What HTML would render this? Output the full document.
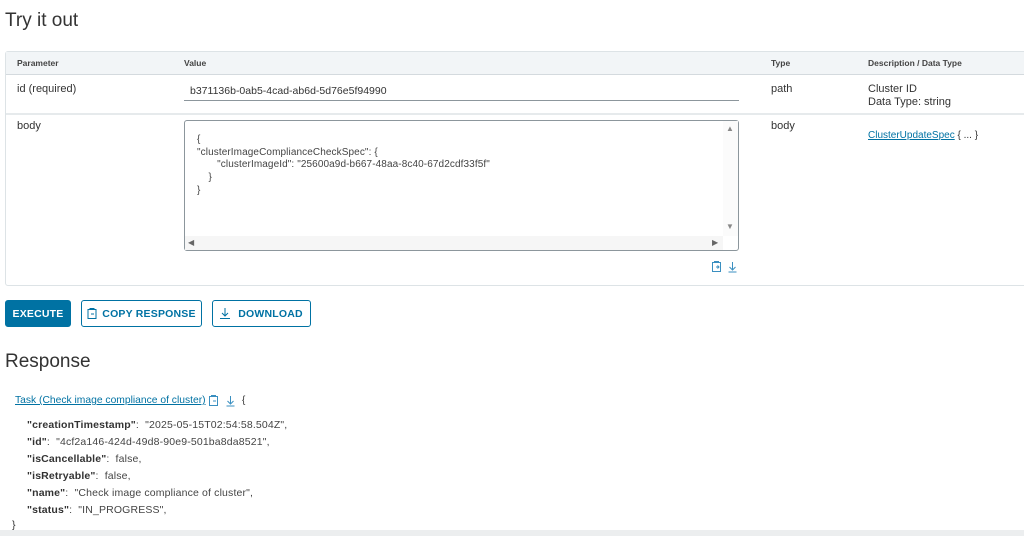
<!DOCTYPE html>
<html><head><meta charset="utf-8"><style>
*{margin:0;padding:0;box-sizing:border-box}
body{width:1024px;height:536px;overflow:hidden;background:#fff;font-family:"Liberation Sans",sans-serif;color:#333;position:relative;font-size:11px}
.a{position:absolute;white-space:nowrap}
h1{position:absolute;font-weight:400;font-size:19px;color:#333}
.th{font-weight:700;font-size:8.5px;color:#444}
.btn{position:absolute;top:300px;height:27px;border:1px solid #0072a3;border-radius:3px;color:#0072a3;font-weight:700;font-size:10.5px;display:flex;align-items:center;justify-content:center;letter-spacing:.2px}
.lnk{color:#0072a3;text-decoration:underline}
.j{position:absolute;left:27px;font-size:10.5px;color:#444;letter-spacing:.15px}
.j b{color:#333}
</style></head><body>
<h1 style="left:5px;top:10px">Try it out</h1>
<div class="a" style="left:5px;top:51px;width:1030px;height:235px;border:1px solid #dde3e6;border-radius:3px"></div>
<div class="a" style="left:6px;top:52px;width:1030px;height:23px;background:#f2f5f7;border-bottom:1px solid #d4dade"></div>
<div class="a th" style="left:17px;top:58px">Parameter</div>
<div class="a th" style="left:184px;top:58px">Value</div>
<div class="a th" style="left:771px;top:58px">Type</div>
<div class="a th" style="left:868px;top:58px">Description / Data Type</div>
<div class="a" style="left:17px;top:83px">id (required)</div>
<div class="a" style="left:190px;top:85px;font-size:10.5px">b371136b-0ab5-4cad-ab6d-5d76e5f94990</div>
<div class="a" style="left:184px;top:100px;width:555px;height:1px;background:#8c969c"></div>
<div class="a" style="left:771px;top:83px">path</div>
<div class="a" style="left:868px;top:83px;line-height:13px">Cluster ID<br>Data Type: string</div>
<div class="a" style="left:6px;top:113px;width:1030px;height:2px;background:#e6eaec"></div>
<div class="a" style="left:17px;top:120px">body</div>
<div class="a" style="left:184px;top:120px;width:555px;height:131px;border:1px solid #8c969c;border-radius:3px;background:#fff"></div>
<div class="a" style="left:185px;top:236px;width:538px;height:14px;background:#f6f6f6"></div>
<div class="a" style="left:723px;top:121px;width:15px;height:115px;background:#fbfbfb"></div>
<div class="a" style="left:188px;top:238px;font-size:8px;color:#666">◀</div>
<div class="a" style="left:712px;top:238px;font-size:8px;color:#666">▶</div>
<div class="a" style="left:726px;top:124px;font-size:8px;color:#888">▲</div>
<div class="a" style="left:726px;top:222px;font-size:8px;color:#888">▼</div>
<div class="a" style="left:197px;top:134px;font-size:10px;line-height:12.7px;color:#444;letter-spacing:.1px">{<br>"clusterImageComplianceCheckSpec": {<br>&nbsp;&nbsp;&nbsp;&nbsp;&nbsp;&nbsp;&nbsp;"clusterImageId": "25600a9d-b667-48aa-8c40-67d2cdf33f5f"<br>&nbsp;&nbsp;&nbsp;&nbsp;}<br>}</div>
<svg class="a" style="left:711px;top:261px" width="30" height="12" viewBox="0 0 30 12"><rect x="1.5" y="1.5" width="8" height="9" fill="none" stroke="#3a8fc0"/><path d="M3.5 1.5v-1h4v1M5 6h3M6.5 4.5l1.5 1.5-1.5 1.5" fill="none" stroke="#3a8fc0"/><path d="M21.5 1v8M18.5 6l3 3 3-3M17.5 11h8" fill="none" stroke="#3a8fc0"/></svg>
<div class="a" style="left:771px;top:120px">body</div>
<div class="a" style="left:868px;top:130px;font-size:10px"><span class="lnk">ClusterUpdateSpec</span> { ... }</div>
<div class="btn" style="left:5px;width:66px;background:#0072a3;color:#fff">EXECUTE</div>
<div class="btn" style="left:81px;width:121px"><svg width="10" height="11" style="margin-right:5px"><rect x="1" y="1.5" width="8" height="9" fill="none" stroke="#0072a3"/><path d="M3 1.5v-1h4v1M4 6h3" stroke="#0072a3" fill="none"/></svg>COPY RESPONSE</div>
<div class="btn" style="left:212px;width:99px"><svg width="10" height="11" style="margin-right:8px"><path d="M5 0v8M2 5l3 3 3-3M0 10.5h10" stroke="#0072a3" fill="none"/></svg>DOWNLOAD</div>
<h1 style="left:5px;top:351px">Response</h1>
<div class="a" style="left:15px;top:395px;font-size:10.3px"><span class="lnk">Task (Check image compliance of cluster)</span></div>
<svg class="a" style="left:208px;top:395px" width="30" height="12"><rect x="1.5" y="1.5" width="8" height="9" fill="none" stroke="#3a8fc0"/><path d="M3.5 1.5v-1h4v1M5 6h3" fill="none" stroke="#3a8fc0"/><path d="M22.5 1v8M19.5 6l3 3 3-3M18.5 11h8" fill="none" stroke="#3a8fc0"/></svg>
<div class="a" style="left:242px;top:395px;font-size:10px">{</div>
<div class="j" style="top:419px"><b>"creationTimestamp"</b>:&nbsp; "2025-05-15T02:54:58.504Z",</div>
<div class="j" style="top:436px"><b>"id"</b>:&nbsp; "4cf2a146-424d-49d8-90e9-501ba8da8521",</div>
<div class="j" style="top:453px"><b>"isCancellable"</b>:&nbsp; false,</div>
<div class="j" style="top:470px"><b>"isRetryable"</b>:&nbsp; false,</div>
<div class="j" style="top:487px"><b>"name"</b>:&nbsp; "Check image compliance of cluster",</div>
<div class="j" style="top:504px"><b>"status"</b>:&nbsp; "IN_PROGRESS",</div>
<div class="a" style="left:12px;top:519px;font-size:10.5px">}</div>
<div class="a" style="left:0;top:530px;width:1024px;height:6px;background:#eceeef"></div>
</body></html>
